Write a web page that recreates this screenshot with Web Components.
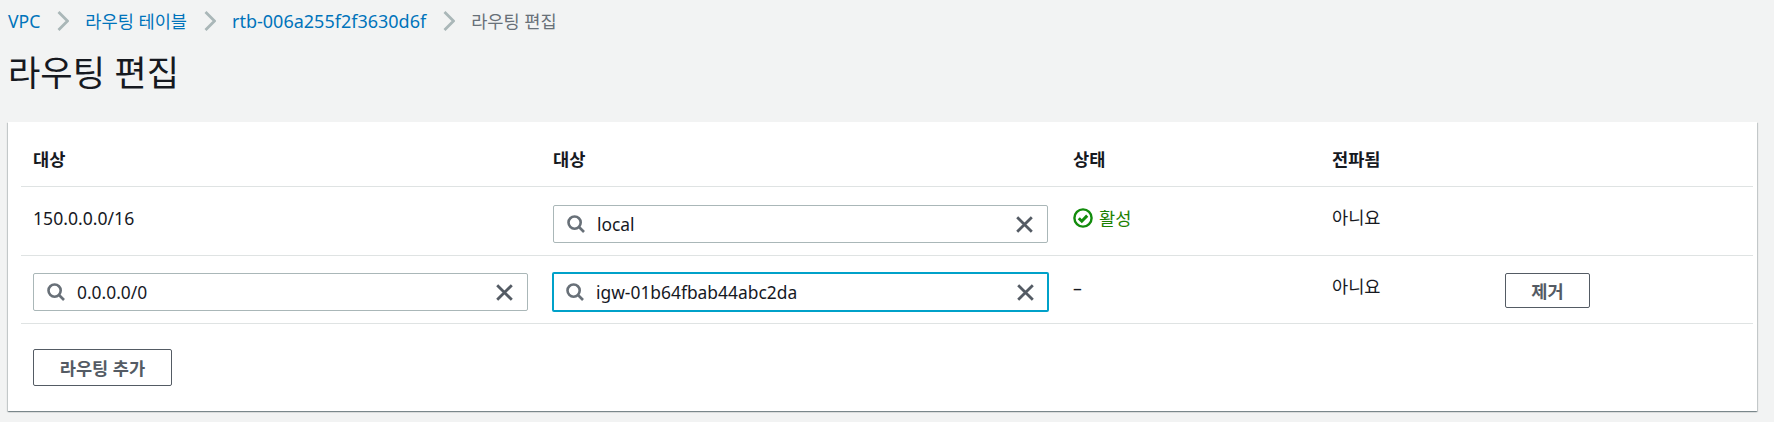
<!DOCTYPE html>
<html lang="ko"><head><meta charset="utf-8"><title>라우팅 편집</title>
<style>
html,body{margin:0;background:#f2f3f3;}
body{font:17.6px/24px "Noto Sans","Noto Sans CJK KR",sans-serif;color:#16191f;height:422px;overflow:hidden;}
</style></head><body>
<edit-page>
  <crumb-bar slot="crumbs">
    <crumb-item href="#">VPC</crumb-item>
    <crumb-item href="#">라우팅 테이블</crumb-item>
    <crumb-item href="#" latin>rtb-006a255f2f3630d6f</crumb-item>
    <crumb-item>라우팅 편집</crumb-item>
  </crumb-bar>
  <span slot="title">라우팅 편집</span>
  <route-table>
    <route-row head>
      <route-cell>대상</route-cell><route-cell>대상</route-cell><route-cell>상태</route-cell><route-cell>전파됨</route-cell><route-cell></route-cell>
    </route-row>
    <route-row first>
      <route-cell up>150.0.0.0/16</route-cell>
      <route-cell field><search-field>local</search-field></route-cell>
      <route-cell up><status-ok>활성</status-ok></route-cell>
      <route-cell ko>아니요</route-cell>
      <route-cell></route-cell>
    </route-row>
    <route-row>
      <route-cell field><search-field>0.0.0.0/0</search-field></route-cell>
      <route-cell field><search-field focused>igw-01b64fbab44abc2da</search-field></route-cell>
      <route-cell>–</route-cell>
      <route-cell ko>아니요</route-cell>
      <route-cell field><aws-button short>제거</aws-button></route-cell>
    </route-row>
    <aws-button slot="footer" wide>라우팅 추가</aws-button>
  </route-table>
</edit-page>
<script>
function def(name, html){
  customElements.define(name, class extends HTMLElement{
    constructor(){super();this.attachShadow({mode:'open'}).innerHTML=html;}
  });
}
def('edit-page',`<style>
:host{display:block;padding:10px 17px 0 8px}
h1{margin:0;font-size:35.2px;line-height:44px;font-weight:400;padding:18px 0 0;height:72px;color:#16191f}
</style>
<slot name="crumbs"></slot><h1><slot name="title"></slot></h1><slot></slot>`);
def('crumb-bar',`<style>:host{display:flex;align-items:center;height:22px}</style><slot></slot>`);
def('crumb-item',`<style>
:host{display:inline-flex;align-items:center;color:#687078}
:host([href]){color:#0073bb}
:host([latin]){font-size:18px}
svg{width:12px;height:20px;margin:0 16px 0 17px;display:block}
:host(:last-child) svg{display:none}
</style><slot></slot><svg viewBox="0 0 12 20" fill="none" stroke="#aab7b8" stroke-width="2.8"><path d="M1.5 1l9 9-9 9"/></svg>`);
def('route-table',`<style>
:host{display:block;background:#fff;height:289px;box-sizing:border-box;padding:0 4px 0 13px;
box-shadow:0 1px 1px 0 rgba(0,28,36,.3),1px 1px 1px 0 rgba(0,28,36,.15),-1px 1px 1px 0 rgba(0,28,36,.15)}
.foot{padding:25px 12px 0}
</style><slot></slot><div class="foot"><slot name="footer"></slot></div>`);
def('route-row',`<style>
:host{display:grid;grid-template-columns:520px 520px 259px 173px 1fr;height:67px;border-bottom:1px solid #dfe3e3;}
:host([first]){height:68px;--field-top:18px}
:host([head]){height:64px;font-weight:700;--cell-top:25px}
</style><slot></slot>`);
def('route-cell',`<style>
:host{display:block;padding:var(--cell-top,20px) 12px 0;min-width:0}
:host([up]){padding-top:19px}
:host([ko]){padding-top:18px}
:host([field]){padding:var(--field-top,17px) 13px 0 12px}
</style><slot></slot>`);
const q=`<svg class="q" viewBox="0 0 18 18" fill="none" stroke="#687078" stroke-width="2.6"><circle cx="7.6" cy="7.6" r="6.1"/><path d="M12 12l5 5"/></svg>`;
const x=`<svg class="x" viewBox="0 0 17 17" fill="none" stroke="#545b64" stroke-width="2.8"><path d="M1.2 1.2l14.6 14.6M15.8 1.2L1.2 15.8"/></svg>`;
def('search-field',`<style>
:host{display:flex;align-items:center;height:38px;box-sizing:border-box;border:1px solid #aab7b8;border-radius:2px;background:#fff;padding:0 14px 0 13px;font-size:17.4px}
:host([focused]){border:2px solid #00a1c9;padding:0 13px 0 12px;height:40px;margin:-1px -1px 0 -1px}
.q{width:18px;height:18px;flex:none;margin-right:12px}
.t{flex:1;min-width:0;white-space:nowrap}
.x{width:17px;height:17px;flex:none}
</style>${q}<span class="t"><slot></slot></span>${x}`);
def('status-ok',`<style>
:host{display:inline-flex;align-items:center;color:#1d8102;gap:6px}
svg{width:20px;height:20px;flex:none}
</style><svg viewBox="0 0 20 20" fill="none" stroke="#128c0c" stroke-width="2.4"><circle cx="10" cy="10" r="8.6"/><path d="M5.8 10.2l3 3 5.4-5.6" stroke-width="3"/></svg><span><slot></slot></span>`);
def('aws-button',`<style>
:host{display:inline-flex;align-items:center;justify-content:center;box-sizing:border-box;height:37px;border:1px solid #545b64;border-radius:2px;color:#545b64;font-weight:700;background:#fff}
:host([wide]){width:139px}
:host([short]){width:85px;height:35px}
</style><slot></slot>`);
</script>
</body></html>
